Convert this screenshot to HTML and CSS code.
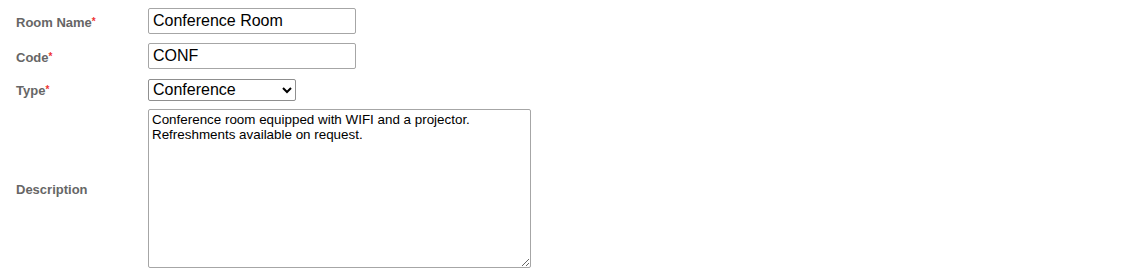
FILE: index.html
```html
<!DOCTYPE html>
<html>
<head>
<meta charset="utf-8">
<link rel="stylesheet" href="styles.css">
</head>
<body>
<form class="form">
  <label class="label" for="name">Room Name<span class="req">*</span></label>
  <input class="text" id="name" type="text" value="Conference Room">

  <label class="label" for="code">Code<span class="req">*</span></label>
  <input class="text" id="code" type="text" value="CONF">

  <label class="label" for="type">Type<span class="req">*</span></label>
  <select class="select" id="type">
    <option selected>Conference</option>
    <option>Meeting</option>
    <option>Training</option>
  </select>

  <label class="label" for="desc">Description</label>
  <textarea class="area" id="desc">Conference room equipped with WIFI and a projector.
Refreshments available on request.</textarea>
</form>
</body>
</html>
```

FILE: styles.css
```css
html, body {
  margin: 0;
  background: #fff;
}
body {
  padding: 8px 0 0 16px;
  font-family: "Liberation Sans", Arial, sans-serif;
}
.form {
  display: grid;
  grid-template-columns: 132px auto;
  grid-template-rows: 26px 26px 22px 159px;
  row-gap: 9px;
  align-items: center;
  justify-items: start;
}
.label {
  font-size: 13px;
  line-height: 15px;
  font-weight: bold;
  color: #666;
  padding-top: 2px;
}
.req {
  color: #e33;
  font-size: 10px;
  vertical-align: top;
  position: relative;
  top: -1px;
}
.text {
  box-sizing: border-box;
  width: 208px;
  height: 26px;
  margin: 0;
  padding: 1px 4px;
  border: 1px solid #a6a6a6;
  border-radius: 2px;
  font-family: "Liberation Sans", Arial, sans-serif;
  font-size: 16px;
  color: #000;
  background: #fff;
}
.select {
  box-sizing: border-box;
  width: 148px;
  height: 22px;
  margin: 1px 0 0 0;
  padding: 0;
  border: 1px solid #8f8f8f;
  border-radius: 2px;
  font-family: "Liberation Sans", Arial, sans-serif;
  font-size: 16px;
  color: #000;
  background: #fff;
}
.area {
  box-sizing: border-box;
  width: 383px;
  height: 159px;
  margin: 0;
  padding: 2px 3px;
  border: 1px solid #a6a6a6;
  border-radius: 2px;
  font-family: "Liberation Sans", Arial, sans-serif;
  font-size: 13.4px;
  line-height: 15px;
  color: #000;
  background: #fff;
  resize: both;
}
```
